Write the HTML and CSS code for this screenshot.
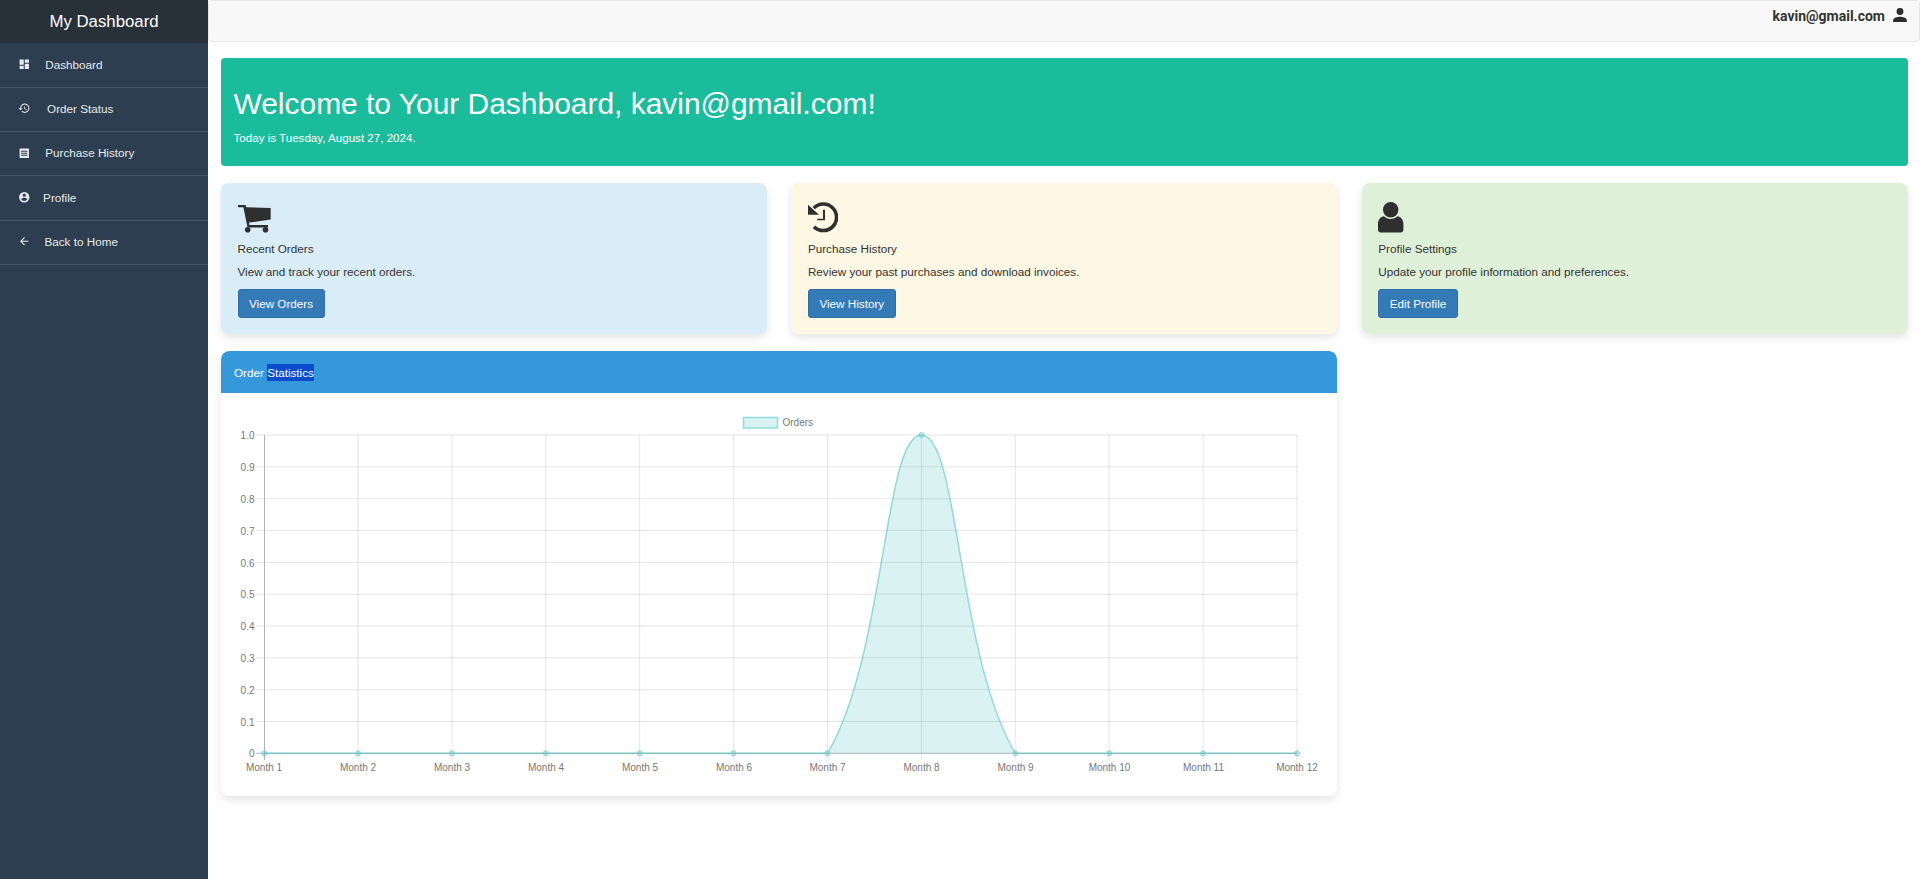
FILE: index.html
```html
<!DOCTYPE html>
<html lang="en">
<head>
<meta charset="utf-8">
<title>My Dashboard</title>
<link rel="stylesheet" href="styles.css">
</head>
<body>
<div class="app">
  <aside class="sidebar">
    <div class="brand">My Dashboard</div>
    <nav class="side-nav">
      <a class="side-link"><svg class="side-icon" viewBox="0 0 24 24"><path d="M3 13h8V3H3zm0 8h8v-6H3zm10 0h8V11h-8zm0-18v6h8V3z"/></svg><span class="gap-a">Dashboard</span></a>
      <a class="side-link"><svg class="side-icon" viewBox="0 0 24 24"><path d="M13 3a9 9 0 0 0-9 9H1l3.900 3.900L9 12H6a7 7 0 1 1 2 4.900l-1.400 1.500A9 9 0 1 0 13 3zm-1 5v5l4.300 2.500.7-1.200-3.500-2.100V8z"/></svg><span class="gap-b">Order Status</span></a>
      <a class="side-link"><svg class="side-icon" viewBox="0 0 24 24"><path fill-rule="evenodd" d="M4 3h16a1 1 0 0 1 1 1v16a1 1 0 0 1-1 1H4a1 1 0 0 1-1-1V4a1 1 0 0 1 1-1zm2 4v2h12V7zm0 4v2h12v-2zm0 4v2h12v-2z"/></svg><span class="gap-a">Purchase History</span></a>
      <a class="side-link"><svg class="side-icon" viewBox="0 0 24 24"><path d="M12 2a10 10 0 1 0 0 20 10 10 0 0 0 0-20zm0 3a3 3 0 1 1 0 6 3 3 0 0 1 0-6zm0 14.200a7.200 7.200 0 0 1-6-3.200c0-2 4-3.100 6-3.100s6 1.100 6 3.100a7.200 7.200 0 0 1-6 3.200z"/></svg><span class="gap-c">Profile</span></a>
      <a class="side-link"><svg class="side-icon" viewBox="0 0 24 24"><path d="M20 11H7.800l5.600-5.600L12 4l-8 8 8 8 1.400-1.400L7.800 13H20z"/></svg><span class="gap-d">Back to Home</span></a>
    </nav>
  </aside>
  <div class="main">
    <header class="topbar">
      <span class="user-mail">kavin@gmail.com</span>
      <svg class="user-icon" viewBox="0 0 24 24"><path d="M12 12a4.600 4.600 0 1 0 0-9.200 4.600 4.600 0 0 0 0 9.200zm0 2.300c-3.100 0-9.200 1.500-9.200 4.600v2.300h18.400v-2.300c0-3.100-6.100-4.600-9.200-4.600z"/></svg>
    </header>
    <div class="content">
      <section class="hero">
        <h1 class="hero-title">Welcome to Your Dashboard, kavin@gmail.com!</h1>
        <p class="hero-date">Today is Tuesday, August 27, 2024.</p>
      </section>
      <div class="grid">
        <section class="card card-blue">
          <svg class="card-icon" viewBox="0 -3 33 30.500"><path d="M0 0H7.600L8.200 2.200L32.700 3V14.600L11 17.600L11.500 20H30V22.400H9.500L5.400 2.300H0Z"/><circle cx="9.700" cy="24.700" r="2.800"/><circle cx="27.500" cy="24.700" r="2.800"/></svg>
          <h3 class="card-title">Recent Orders</h3>
          <p class="card-text">View and track your recent orders.</p>
          <a class="btn">View Orders</a>
        </section>
        <section class="card card-yellow">
          <svg class="card-icon" viewBox="0 0 30 30.500"><path d="M4.500 5A15 15 0 1 1 4.700 25.900L7.200 23.500A11.500 11.500 0 1 0 7 7.300Z"/><path d="M0 2.700V12.700H11Z"/><path d="M15 7.700H17V18.300H9.300V16.700H15Z"/></svg>
          <h3 class="card-title">Purchase History</h3>
          <p class="card-text">Review your past purchases and download invoices.</p>
          <a class="btn">View History</a>
        </section>
        <section class="card card-green">
          <svg class="card-icon" viewBox="0 0 25.400 30.500"><circle cx="12.700" cy="7.700" r="7.700"/><path d="M0 27.500V22C0 17.500 3 14.500 6 14.300C8 16.200 10 17 12.700 17S17.400 16.200 19.400 14.300C22.400 14.500 25.400 17.500 25.400 22V27.500A3 3 0 0 1 22.400 30.500H3A3 3 0 0 1 0 27.500Z"/></svg>
          <h3 class="card-title">Profile Settings</h3>
          <p class="card-text">Update your profile information and preferences.</p>
          <a class="btn">Edit Profile</a>
        </section>
        <section class="chart-card">
          <div class="chart-head">Order <span class="selected">Statistics</span></div>
          <svg class="chart" viewBox="0 0 1116 403" width="1116" height="403">
            <path class="grid-lines" d="M35 42H1076.300M35 73.800H1076.300M35 105.700H1076.300M35 137.500H1076.300M35 169.300H1076.300M35 201.200H1076.300M35 233H1076.300M35 264.800H1076.300M35 296.700H1076.300M35 328.500H1076.300"/>
            <path class="grid-lines" d="M137 42V367M230.900 42V367M324.800 42V367M418.700 42V367M512.600 42V367M606.500 42V367M700.400 42V367M794.300 42V367M888.200 42V367M982.100 42V367M1076 42V367"/>
            <path class="axis" d="M43.500 42V367M35 360.300H1076.300"/>
            <path class="area" d="M43 360.300H606.500C665 261 662.800 42 700.400 42S735.800 261 794.300 360.300H1076.300Z"/>
            <path class="line" d="M43 360.300H606.500C665 261 662.800 42 700.400 42S735.800 261 794.300 360.300H1076.300"/>
            <g class="dots">
              <circle cx="43.300" cy="360.300" r="2.500"/><circle cx="137" cy="360.300" r="2.500"/><circle cx="230.900" cy="360.300" r="2.500"/><circle cx="324.800" cy="360.300" r="2.500"/><circle cx="418.700" cy="360.300" r="2.500"/><circle cx="512.600" cy="360.300" r="2.500"/><circle cx="606.500" cy="360.300" r="2.500"/><circle cx="700.400" cy="42" r="2.500"/><circle cx="794.300" cy="360.300" r="2.500"/><circle cx="888.200" cy="360.300" r="2.500"/><circle cx="982.100" cy="360.300" r="2.500"/><circle cx="1076" cy="360.300" r="2.500"/>
            </g>
            <rect class="legend-box" x="522.500" y="24.500" width="34" height="10.500"/>
            <text class="chart-text" x="561.500" y="33">Orders</text>
            <g class="y-labels">
              <text x="33.500" y="46">1.0</text><text x="33.500" y="78">0.9</text><text x="33.500" y="110">0.8</text><text x="33.500" y="142">0.7</text><text x="33.500" y="174">0.6</text><text x="33.500" y="205">0.5</text><text x="33.500" y="237">0.4</text><text x="33.500" y="269">0.3</text><text x="33.500" y="301">0.2</text><text x="33.500" y="333">0.1</text><text x="33.500" y="364">0</text>
            </g>
            <g class="x-labels">
              <text x="43" y="378">Month 1</text><text x="137" y="378">Month 2</text><text x="231" y="378">Month 3</text><text x="325" y="378">Month 4</text><text x="419" y="378">Month 5</text><text x="513" y="378">Month 6</text><text x="606.500" y="378">Month 7</text><text x="700.500" y="378">Month 8</text><text x="794.500" y="378">Month 9</text><text x="888.500" y="378">Month 10</text><text x="982.500" y="378">Month 11</text><text x="1076" y="378">Month 12</text>
            </g>
          </svg>
        </section>
      </div>
    </div>
  </div>
</div>
</body>
</html>
```
FILE: styles.css
```css
* { box-sizing: border-box; }
html, body { margin: 0; height: 100%; }
body { font-family: "Liberation Sans", Arial, sans-serif; font-size: 11.700px; color: #333; background: #fff; }
.app { display: flex; height: 879px; overflow: hidden; }
.sidebar { width: 208px; flex: none; background: #2c3e50; }
.brand { height: 43.400px; background: #283038; color: #fff; font-size: 16.800px; line-height: 43px; text-align: center; }
.side-nav { display: flex; flex-direction: column; }
.side-link { display: flex; align-items: center; height: 44.300px; padding: 0 0 1.500px 18.300px; border-bottom: 1px solid #465463; color: #e6eaeb; }
.side-icon { width: 12.500px; height: 12.500px; fill: #e6eaeb; flex: none; }
.gap-a { margin-left: 14.500px; }
.gap-b { margin-left: 16.300px; }
.gap-c { margin-left: 12.300px; }
.gap-d { margin-left: 13.700px; }
.main { flex: 1; min-width: 0; display: flex; flex-direction: column; }
.topbar { height: 42px; background: #f8f8f8; border: 1px solid #e7e7e7; border-radius: 4px; display: flex; justify-content: flex-end; align-items: flex-start; padding: 5px 10px 0 0; }
.user-mail { margin-top: 2px; font-family: Roboto, "Liberation Sans", sans-serif; font-size: 14px; font-weight: 700; line-height: 16px; color: #333; }
.user-icon { width: 18px; height: 18px; margin-left: 6px; fill: #2b2b2b; }
.content { padding: 16px 12px 0 13px; }
.hero { height: 108px; background: #1abc9c; border-radius: 4px; color: #fff; padding: 28px 12.500px 0; }
.hero-title { margin: 0; font-size: 29.950px; font-weight: 400; line-height: 36px; }
.hero-date { margin: 8.500px 0 0; font-size: 11.600px; line-height: 14px; }
.grid { display: grid; grid-template-columns: 545.500px 545.500px 1fr; column-gap: 24.900px; row-gap: 17px; margin-top: 17px; }
.card { height: 151px; border-radius: 8px; padding: 19px 16.500px 0; box-shadow: 0 4px 8px rgba(0, 0, 0, .1); }
.card-blue { background: #d9edf7; }
.card-yellow { background: #fdf7e3; }
.card-green { background: #dff0d8; }
.card-icon { display: block; width: auto; height: 30.500px; fill: #2f2f2f; }
.card-title { margin: 9.500px 0 0; font-size: 11.700px; font-weight: 400; line-height: 14px; }
.card-text { margin: 9px 0 0; line-height: 14px; }
.btn { display: inline-block; margin-top: 10px; padding: 5.500px 10.500px; height: 29px; background: #337ab7; border: 1px solid #2e6da4; border-radius: 3px; color: #fff; line-height: 15px; }
.chart-card { grid-column: span 2; height: 445px; border-radius: 8px; background: #fff; box-shadow: 0 4px 8px rgba(0, 0, 0, .1); overflow: hidden; }
.chart-head { height: 42px; background: #3498db; color: #fff; padding: 12.500px 13px 0; line-height: 17px; border-radius: 8px 8px 0 0; }
.selected { display: inline-block; background: #0b4ccb; }
.chart { display: block; }
.grid-lines { stroke: rgba(0, 0, 0, .1); fill: none; }
.axis { stroke: #b3b3b3; fill: none; }
.area { fill: rgba(75, 192, 192, .2); stroke: none; }
.line { fill: none; stroke: rgba(75, 192, 192, .55); stroke-width: 1.500; }
.dots circle { fill: rgba(75, 192, 192, .25); stroke: #7fd4d4; stroke-width: 1; }
.legend-box { fill: rgba(75, 192, 192, .2); stroke: #8fdcdc; stroke-width: 1.500; }
.chart-text, .y-labels text, .x-labels text { font-family: "Liberation Sans", Arial, sans-serif; font-size: 10px; fill: #777; }
.y-labels text { text-anchor: end; }
.x-labels text { text-anchor: middle; }
```
